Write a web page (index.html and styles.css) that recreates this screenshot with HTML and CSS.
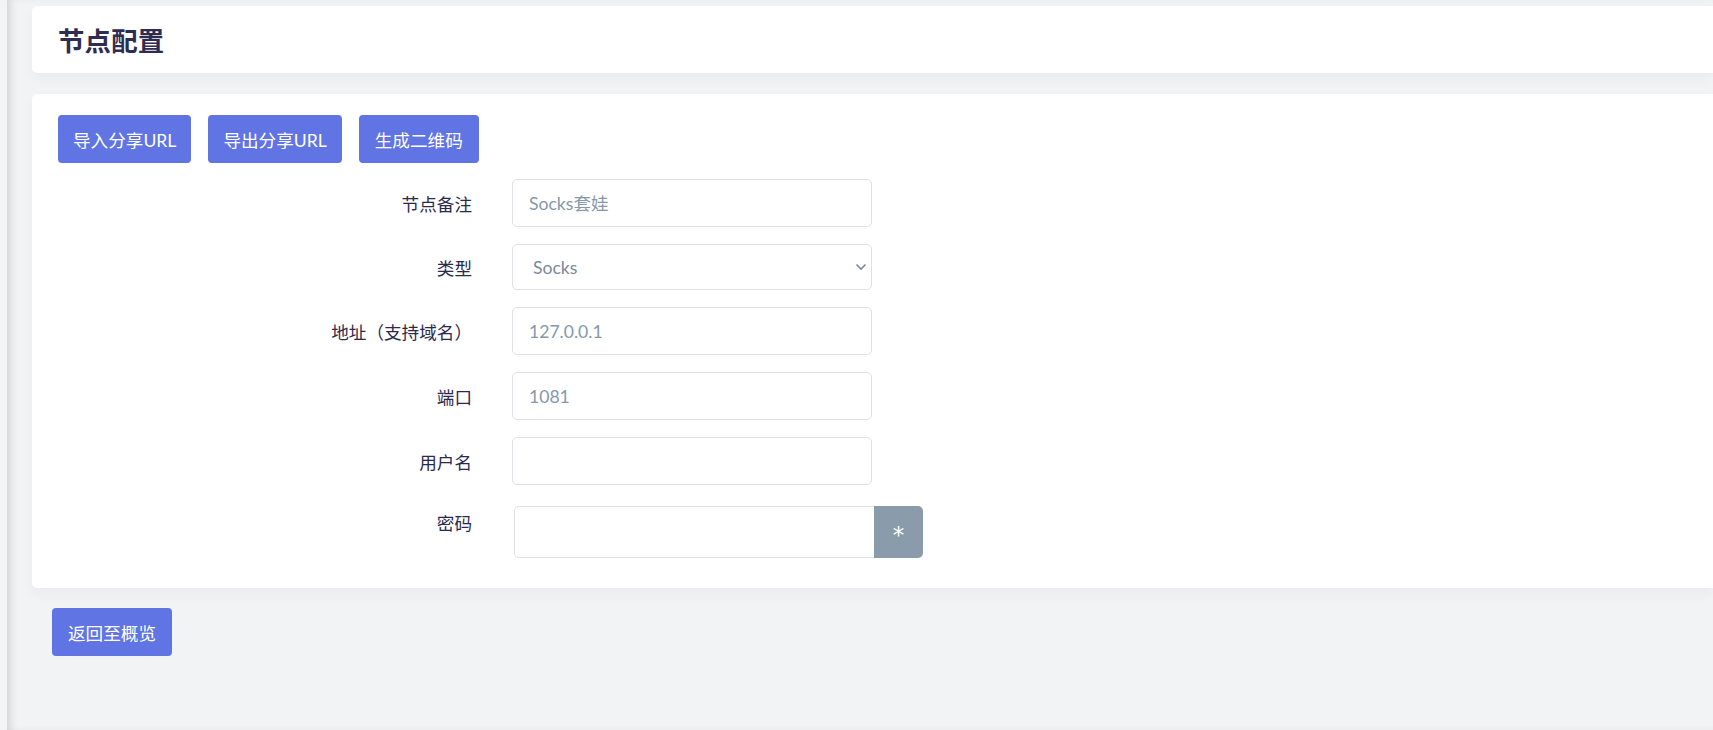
FILE: index.html
```html
<!DOCTYPE html>
<html lang="zh-CN">

<head>
    <meta charset="UTF-8">
    <meta name="viewport" content="width=device-width, initial-scale=1.0">
    <title>节点配置</title>
    <link rel="stylesheet" href="styles.css">
</head>

<body>
    <div class="layout">
        <div class="side"></div>
        <div class="main">
            <div class="card head">
                <h2>节点配置</h2>
            </div>
            <div class="card form-card">
                <div class="tools">
                    <button class="btn url">导入分享URL</button>
                    <button class="btn url">导出分享URL</button>
                    <button class="btn">生成二维码</button>
                </div>
                <div class="rows">
                    <div class="row">
                        <label>节点备注</label>
                        <input type="text" class="inp" placeholder="Socks套娃">
                    </div>
                    <div class="row">
                        <label>类型</label>
                        <div class="select-wrap">
                            <select class="inp sel">
                                <option>Socks</option>
                            </select>
                            <svg class="arrow" width="12" height="8" viewBox="0 0 12 8">
                                <path d="M1.5 1.5 L6 6 L10.5 1.5" fill="none" stroke="#7b8899" stroke-width="1.6" />
                            </svg>
                        </div>
                    </div>
                    <div class="row">
                        <label>地址（支持域名）</label>
                        <input type="text" class="inp" placeholder="127.0.0.1">
                    </div>
                    <div class="row">
                        <label>端口</label>
                        <input type="text" class="inp" placeholder="1081">
                    </div>
                    <div class="row">
                        <label>用户名</label>
                        <input type="text" class="inp">
                    </div>
                    <div class="row row-pwd">
                        <label>密码</label>
                        <div class="pwd-group">
                            <input type="password" class="inp pwd">
                            <button class="eye">*</button>
                        </div>
                    </div>
                </div>
            </div>
            <button class="btn back">返回至概览</button>
        </div>
    </div>
</body>

</html>
```

FILE: styles.css
```css
* {
    margin: 0;
    padding: 0;
    box-sizing: border-box;
}
html,
body {
    height: 100%;
    overflow: hidden;
}
body {
    font-family: Lato, "Noto Sans CJK SC", sans-serif;
    font-size: 17.6px;
    color: #2b2a4c;
    background: #f2f3f5;
}
.layout {
    display: flex;
    height: 100%;
}
.side {
    width: 7px;
    flex-shrink: 0;
    background: #f3f4f6;
}
.main {
    flex: 1;
    padding: 6px 0 0 25px;
    background: #f2f3f5;
    box-shadow: inset 7px 0 10px -5px rgba(0, 0, 0, 0.16);
}
.card {
    background: #fff;
    border-radius: 5px 0 0 5px;
    box-shadow: 0 6px 14px rgba(0, 0, 0, 0.035);
}
.head {
    height: 67px;
    display: flex;
    align-items: center;
    padding-left: 26px;
    margin-bottom: 21px;
}
.head h2 {
    font-size: 26.4px;
    font-weight: 700;
    color: #2f2c52;
    letter-spacing: 0.2px;
}
.form-card {
    padding: 21px 0 30px 26px;
}
.tools {
    display: flex;
    gap: 17px;
    margin-bottom: 16px;
}
.btn {
    height: 48px;
    padding: 0 16px;
    border: none;
    border-radius: 4px;
    background: #6074e4;
    color: #fff;
    font-family: inherit;
    font-size: 17.6px;
    cursor: pointer;
}
.btn.url {
    padding: 0 15px;
}
.rows {
    display: flex;
    flex-direction: column;
    gap: 17px;
}
.row {
    display: flex;
    align-items: center;
}
.row label {
    width: 414px;
    margin-right: 40px;
    text-align: right;
    color: #2b2a4c;
}
.inp {
    width: 360px;
    height: 48px;
    padding: 0 16px;
    border: 1px solid #dfe1e7;
    border-radius: 5px;
    background: #fff;
    font-family: inherit;
    font-size: 17.6px;
    color: #4a4a68;
    outline: none;
}
.inp::placeholder {
    color: #8797aa;
}
.select-wrap {
    position: relative;
}
.sel {
    height: 46px;
    padding-left: 20px;
    appearance: none;
    -webkit-appearance: none;
    color: #7c899b;
}
.arrow {
    position: absolute;
    right: 5px;
    top: 19px;
}
.row-pwd {
    align-items: flex-start;
    margin-top: 4px;
}
.row-pwd label {
    line-height: 36px;
}
.pwd-group {
    display: flex;
    margin-left: 2px;
}
.pwd {
    height: 52px;
    border-radius: 5px 0 0 5px;
    border-right: none;
}
.eye {
    width: 49px;
    height: 52px;
    padding-top: 6px;
    border: none;
    border-radius: 0 5px 5px 0;
    background: #8a9bab;
    color: #fff;
    font-size: 23px;
    font-family: "DejaVu Sans", sans-serif;
    cursor: pointer;
}
.back {
    margin: 20px 0 0 20px;
}
```
